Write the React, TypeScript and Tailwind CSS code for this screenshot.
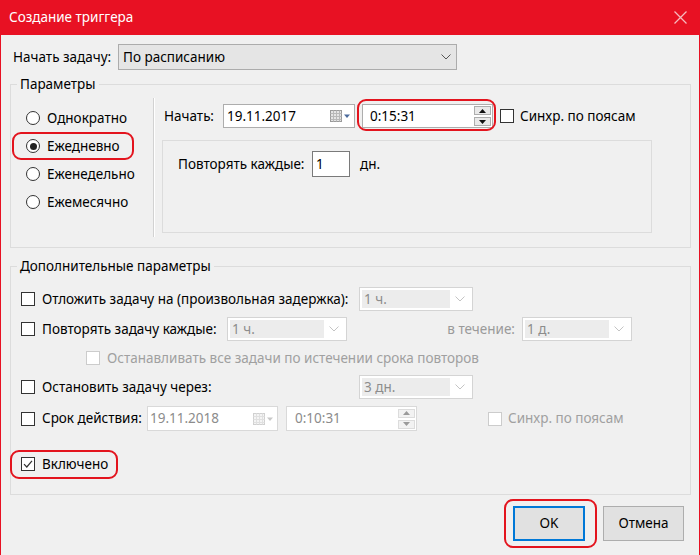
import React from 'react';

const Ring = ({ className }: { className: string }) => (
  <span className={`pointer-events-none absolute rounded-[9px] border-2 border-[#e3141e] ${className}`} />
);

const Check = ({ checked = false, disabled = false }: { checked?: boolean; disabled?: boolean }) => (
  <span
    className={`flex h-[14px] w-[14px] shrink-0 items-center justify-center border bg-white ${
      disabled ? 'border-[#cccccc]' : 'border-[#333333]'
    }`}
  >
    {checked && (
      <svg width="10" height="10" viewBox="0 0 10 10">
        <path d="M1 5.2 L3.8 8 L9 1.8" fill="none" stroke="#333" strokeWidth="1.2" />
      </svg>
    )}
  </span>
);

const Radio = ({ checked = false }: { checked?: boolean }) => (
  <span className="flex h-[14px] w-[14px] shrink-0 items-center justify-center rounded-full border border-[#333333] bg-white">
    {checked && <span className="h-[7px] w-[7px] rounded-full bg-[#222]" />}
  </span>
);

const Chevron = ({ color }: { color: string }) => (
  <svg width="10" height="6" viewBox="0 0 10 6">
    <path d="M0.5 0.5 L5 5 L9.5 0.5" fill="none" stroke={color} strokeWidth="1" />
  </svg>
);

const DisabledSelect = ({ value, w }: { value: string; w: string }) => (
  <div className={`flex h-[24px] items-stretch border border-[#d4d4d4] bg-white p-[2px] ${w}`}>
    <div className="flex flex-1 items-center bg-[#ececec] pl-[2px] text-[#8c8c8c]">{value}</div>
    <div className="flex w-[20px] items-center justify-center">
      <Chevron color="#c4c4c4" />
    </div>
  </div>
);

const CalIcon = ({ disabled = false }: { disabled?: boolean }) => (
  <svg width="22" height="14" viewBox="0 0 22 14">
    <rect x="0.5" y="1.5" width="11" height="11" fill={disabled ? '#f4f4f4' : '#e4e4e4'} stroke={disabled ? '#d0d0d0' : '#9a9a9a'} />
    <path
      d="M0.5 4.5 H11.5 M0.5 7.5 H11.5 M0.5 10.5 H11.5 M3.5 1.5 V12.5 M6.5 1.5 V12.5 M9.5 1.5 V12.5"
      stroke={disabled ? '#e0e0e0' : '#b8b8b8'}
      strokeWidth="1"
    />
    <path d="M14 5.5 H20 L17 9 Z" fill={disabled ? '#c8c8c8' : '#4b6a9c'} />
  </svg>
);

const Spinner = ({ disabled = false }: { disabled?: boolean }) => (
  <div className="flex flex-col gap-[2px]">
    {[0, 1].map(i => (
      <span
        key={i}
        className={`flex h-[9px] w-[17px] items-center justify-center border ${
          disabled ? 'border-[#dcdcdc] bg-[#f2f2f2]' : 'border-[#adadad] bg-[#e9e9e9]'
        }`}
      >
        <svg width="7" height="4" viewBox="0 0 7 4">
          <path d={i === 0 ? 'M0 4 L3.5 0 L7 4 Z' : 'M0 0 L3.5 4 L7 0 Z'} fill={disabled ? '#9a9a9a' : '#111'} />
        </svg>
      </span>
    ))}
  </div>
);

const App = () => {
  return (
    <div
      className="flex h-[555px] w-[700px] flex-col overflow-hidden border-x border-[#e81123] bg-[#f0f0f0] text-[13.5px] text-black"
      style={{ fontFamily: '"Noto Sans", "Liberation Sans", sans-serif' }}
    >
      {/* title bar */}
      <div className="flex h-[35px] shrink-0 items-center justify-between bg-[#e81123] pl-[8px] pr-[12px] text-white">
        <span className="text-[13.5px]">Создание триггера</span>
        <svg width="13" height="13" viewBox="0 0 13 13">
          <path d="M0.5 0.5 L12.5 12.5 M12.5 0.5 L0.5 12.5" stroke="#f6b9bd" strokeWidth="1.3" />
        </svg>
      </div>

      {/* start task */}
      <div className="mt-[9px] flex items-center pl-[12px]">
        <span className="w-[105px]">Начать задачу:</span>
        <div className="flex h-[26px] w-[339px] items-center justify-between border border-[#acacac] bg-[#e5e5e5] pl-[4px] pr-[5px]">
          <span>По расписанию</span>
          <Chevron color="#555" />
        </div>
      </div>

      {/* parameters */}
      <fieldset className="mt-[5px] ml-[9px] w-[681px] border border-[#dcdcdc]">
        <legend className="ml-[6px] px-[3px] leading-[18px]">Параметры</legend>
        <div className="flex h-[154px]">
          <div className="flex w-[142px] flex-col pt-[11px]">
            {[
              ['Однократно', false],
              ['Ежедневно', true],
              ['Еженедельно', false],
              ['Ежемесячно', false],
            ].map(([label, on]) => (
              <div key={label as string} className="relative flex h-[28px] items-center gap-[7px] pl-[15px]">
                <Radio checked={on as boolean} />
                <span>{label}</span>
                {on && <Ring className="left-[1px] top-0 h-[28px] w-[122px]" />}
              </div>
            ))}
          </div>
          <div className="mt-[5px] h-[139px] w-[2px] border-l border-r border-l-[#d2d2d2] border-r-white" />
          <div className="flex flex-col pl-[9px]">
            <div className="mt-[11px] flex h-[24px] items-center">
              <span className="w-[59px]">Начать:</span>
              <div className="flex h-[24px] w-[132px] items-center justify-between border border-[#adadad] bg-white pl-[3px] pr-[2px]">
                <span>19.11.2017</span>
                <CalIcon />
              </div>
              <div className="relative ml-[7px] flex h-[24px] w-[131px] items-center justify-between border border-[#adadad] bg-white pl-[7px] pr-[1px]">
                <span>0:15:31</span>
                <Spinner />
                <Ring className="-left-[6px] -right-[4px] -top-[6px] -bottom-[4px]" />
              </div>
              <span className="ml-[7px]">
                <Check />
              </span>
              <span className="ml-[6px]">Синхр. по поясам</span>
            </div>
            <div className="mt-[12px] ml-[-2px] h-[93px] w-[490px] border border-[#dcdcdc] pl-[15px] pt-[10px]">
              <div className="flex h-[26px] items-center">
                <span className="w-[134px]">Повторять каждые:</span>
                <div className="flex h-[26px] w-[38px] items-center border border-[#7a7a7a] bg-white pl-[3px]">1</div>
                <span className="ml-[10px]">дн.</span>
              </div>
            </div>
          </div>
        </div>
      </fieldset>

      {/* advanced */}
      <fieldset className="mt-[9px] ml-[9px] w-[681px] border border-[#dcdcdc]">
        <legend className="ml-[6px] px-[3px] leading-[18px]">Дополнительные параметры</legend>
        <div className="flex h-[219px] flex-col pl-[10px] pt-[12px]">
          <div className="flex h-[24px] items-center">
            <div className="flex w-[338px] items-center gap-[7px]">
              <Check />
              <span>Отложить задачу на (произвольная задержка):</span>
            </div>
            <DisabledSelect value="1 ч." w="w-[114px]" />
          </div>
          <div className="mt-[6px] flex h-[24px] items-center">
            <div className="flex w-[206px] items-center gap-[7px]">
              <Check />
              <span>Повторять задачу каждые:</span>
            </div>
            <DisabledSelect value="1 ч." w="w-[120px]" />
            <span className="w-[175px] pr-[7px] text-right text-[#9a9a9a]">в течение:</span>
            <DisabledSelect value="1 д." w="w-[110px]" />
          </div>
          <div className="mt-[5px] ml-[65px] flex h-[24px] items-center gap-[7px] text-[#a0a0a0]">
            <Check disabled />
            <span>Останавливать все задачи по истечении срока повторов</span>
          </div>
          <div className="mt-[5px] flex h-[24px] items-center">
            <div className="flex w-[338px] items-center gap-[7px]">
              <Check />
              <span>Остановить задачу через:</span>
            </div>
            <DisabledSelect value="3 дн." w="w-[114px]" />
          </div>
          <div className="mt-[7px] flex h-[25px] items-center">
            <div className="flex w-[126px] items-center gap-[7px]">
              <Check />
              <span>Срок действия:</span>
            </div>
            <div className="flex h-[25px] w-[131px] items-center justify-between border border-[#d9d9d9] bg-white pl-[2px] pr-[2px] text-[#8c8c8c]">
              <span>19.11.2018</span>
              <CalIcon disabled />
            </div>
            <div className="ml-[8px] flex h-[25px] w-[131px] items-center justify-between border border-[#d9d9d9] bg-white pl-[8px] pr-[1px] text-[#8c8c8c]">
              <span>0:10:31</span>
              <Spinner disabled />
            </div>
            <span className="ml-[71px]">
              <Check disabled />
            </span>
            <span className="ml-[6px] text-[#a0a0a0]">Синхр. по поясам</span>
          </div>
          <div className="relative mt-[21px] flex h-[24px] w-[100px] items-center gap-[7px]">
            <Check checked />
            <span>Включено</span>
            <Ring className="-left-[11px] -top-[2px] h-[29px] w-[108px]" />
          </div>
        </div>
      </fieldset>

      {/* buttons */}
      <div className="mt-[11px] mr-[15px] flex justify-end gap-[18px]">
        <div className="relative">
          <button className="h-[35px] w-[72px] border-2 border-[#0078d7] bg-[#e1e1e1]">OK</button>
          <Ring className="-left-[9px] -right-[12px] -top-[7px] -bottom-[7px]" />
        </div>
        <button className="h-[35px] w-[81px] border border-[#adadad] bg-[#e1e1e1]">Отмена</button>
      </div>
    </div>
  );
};

export default App;
